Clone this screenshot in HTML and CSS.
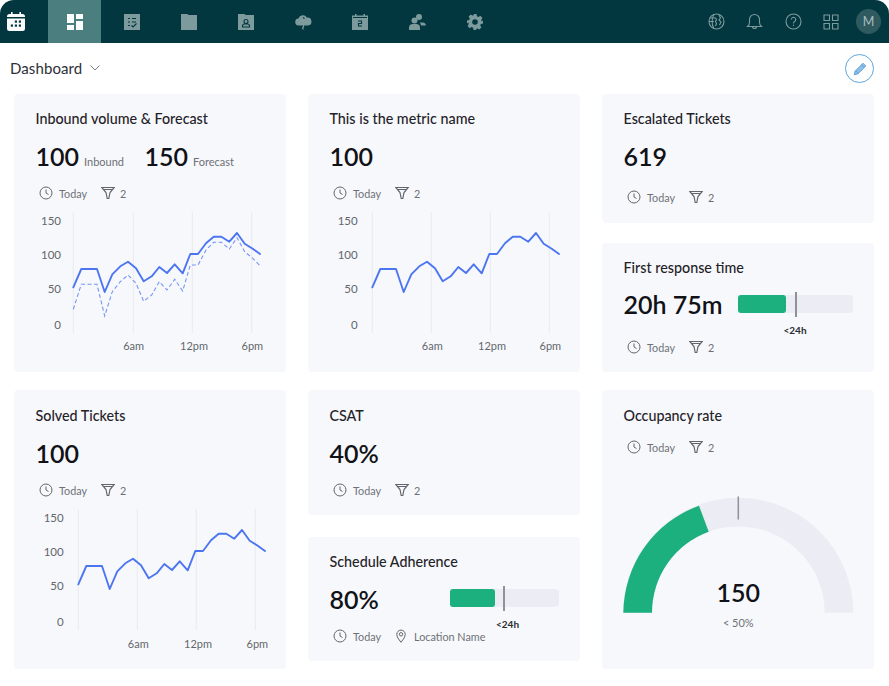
FILE: index.html
```html
<!DOCTYPE html>
<html lang="en">
<head>
<meta charset="utf-8">
<title>Dashboard</title>
<link rel="stylesheet" href="styles.css">
</head>
<body>
<header class="topbar">
  <svg class="logo" viewBox="0 0 18 19" width="18" height="19"><path class="white" d="M4 0h1.600v2h6.800V0H14v2h1.500A2.500 2.500 0 0 1 18 4.500V5H0v-.5A2.500 2.500 0 0 1 2.500 2H4zM0 6.500h18v10a2.500 2.500 0 0 1-2.500 2.500h-13A2.500 2.500 0 0 1 0 16.500z"/><g class="dark"><rect x="7.800" y="8.500" width="2.200" height="2.200"/><rect x="11.800" y="8.500" width="2.200" height="2.200"/><rect x="3.800" y="12.500" width="2.200" height="2.200"/><rect x="7.800" y="12.500" width="2.200" height="2.200"/><rect x="11.800" y="12.500" width="2.200" height="2.200"/></g></svg>
  <nav class="tabs">
    <a class="tab active"><svg viewBox="0 0 16 16" width="16" height="16"><path class="white" d="M0 0h7v9H0zM9 0h7v5H9zM0 11h7v5H0zM9 7h7v9H9z"/></svg></a>
    <a class="tab"><svg viewBox="0 0 16 16" width="16" height="16"><rect class="dim" width="16" height="16"/><path class="dark-line" d="M4 4.500h2M8 4.500h4M4 8h2M8 8h4M4 11.500h2M7.500 11.500l1.500 1.500 3.500-3.500"/></svg></a>
    <a class="tab"><svg viewBox="0 0 16 16" width="16" height="16"><path class="dim" d="M0 0h6.500l1 1H16v15H0z"/></svg></a>
    <a class="tab"><svg viewBox="0 0 16 16" width="16" height="16"><path class="dim" d="M0 0h6.500l1 1H16v15H0z"/><circle class="dark-line" cx="8" cy="7.500" r="2"/><path class="dark-line" d="M4.500 13v-1a2 2 0 0 1 2-2h3a2 2 0 0 1 2 2v1z"/></svg></a>
    <a class="tab"><svg viewBox="0 0 17 16" width="17" height="16"><path class="dim" d="M4 11.500a3.500 3.500 0 0 1-.5-7A4.500 4.500 0 0 1 11.800 3.500 4 4 0 0 1 13 11.500z"/><path class="dim-line" d="M8.500 11v2l-1 1 1 1.500"/><path class="dark-line" d="M8 3.500l1.500 1"/></svg></a>
    <a class="tab"><svg viewBox="0 0 16 16" width="16" height="16"><path class="dim" d="M3 0h1.500v1.500h7V0H13v1.500h3V16H0V1.500h3z"/><path class="dark-fill" d="M1 3h14v1H1z"/><path class="dark-line" d="M6 7h3.500v2.500H6.500V12h3.500"/></svg></a>
    <a class="tab"><svg viewBox="0 0 17 16" width="17" height="16"><circle class="dim" cx="10" cy="3" r="3"/><circle class="dim" cx="5.500" cy="6.500" r="3"/><path class="dim" d="M0 16v-2a4 4 0 0 1 4-4h3a4 4 0 0 1 4 4v2z"/><path class="dim" d="M11 8.500h2.500a3.500 3.500 0 0 1 3.500 3H12z"/></svg></a>
    <a class="tab"><svg viewBox="0 0 16 16" width="16" height="16"><path class="dim" d="M6.500 0h3l.4 2.200 1.500.7 2-1.100 2 2.200-1.200 1.900.6 1.500L16 6.500v3l-2.200.4-.6 1.500 1.200 1.900-2 2.200-2-1.100-1.500.7L9.500 16h-3l-.4-2.200-1.500-.7-2 1.100-2-2.200 1.200-1.900-.6-1.500L0 9.500v-3l2.200-.4.600-1.500L1.600 2.700l2-2.200 2 1.100 1.500-.7z"/><circle class="dark-fill" cx="8" cy="8" r="2.800"/></svg></a>
  </nav>
  <div class="tools">
    <svg viewBox="0 0 17 17" width="17" height="17"><circle class="tool-line" cx="8.500" cy="8.500" r="7.500"/><path class="tool-line" d="M6 1.500C3.500 5 3.500 12 6 15.500M1 8.500h5M2 5h5.500l1 1.500-1 2 1 2-1 2.500M11 2l1.500 3-1.500 2 2 2-1.500 3"/></svg>
    <svg viewBox="0 0 17 17" width="17" height="17"><path class="tool-line" d="M1.500 13.500c1.300-1 2-2.200 2-4V6.500a5 5 0 0 1 10 0v3c0 1.800.7 3 2 4zM6.500 13.500a2 2 0 0 0 4 0"/></svg>
    <svg viewBox="0 0 17 17" width="17" height="17"><circle class="tool-line" cx="8.500" cy="8.500" r="7.500"/><path class="tool-line" d="M6.300 6.500a2.200 2.200 0 1 1 3.400 1.900c-.8.500-1.200 1-1.200 2M8.500 11.800v1.200"/></svg>
    <svg class="tool-last" viewBox="0 0 16 16" width="16" height="16"><path class="tool-line" d="M1 1h5.500v5.500H1zM9.500 1H15v5.500H9.500zM1 9.500h5.500V15H1zM9.500 9.500H15V15H9.500z"/></svg>
    <span class="avatar">M</span>
  </div>
</header>

<div class="subbar">
  <div class="crumb">
    <span>Dashboard</span>
    <svg viewBox="0 0 10 6" width="10" height="6"><path class="chev" d="M.5.500L5 5 9.500.500"/></svg>
  </div>
  <button class="edit" aria-label="Edit">
    <svg viewBox="0 0 14 14" width="14" height="14"><path class="pen" d="M10 1.200l2.800 2.800-8 8-3.600.8.800-3.600z"/><path class="pen-cut" d="M8.500 2.700l2.800 2.800M2.700 8.500l2.800 2.800"/></svg>
  </button>
</div>

<main class="board">
  <section class="column">
    <article class="card tall">
      <h2 class="title">Inbound volume &amp; Forecast</h2>
      <div class="values">
        <span class="value">100</span><span class="unit">Inbound</span>
        <span class="value second">150</span><span class="unit">Forecast</span>
      </div>
      <div class="meta meta-chart">
        <svg class="mi" viewBox="0 0 14 14" width="14" height="14"><circle cx="7" cy="7" r="6"/><path d="M7 3.500V7l2.500 1.500"/></svg><span class="mt">Today</span>
        <svg class="mi filter" viewBox="0 0 14 14" width="14" height="14"><path d="M.8 1.500h12.400L9 6.500 7.800 12.500H6.200L5 6.500zM2.800 3.500h8.400"/></svg><span class="mt">2</span>
      </div>
      <svg class="chart" viewBox="0 0 272 152" width="272" height="152">
        <g class="grid"><path d="M59.300 8v121M119.300 8v121M178.300 8v121M237.700 8v121"/></g>
        <g class="ylab"><text x="47" y="21">150</text><text x="47" y="55">100</text><text x="47" y="89">50</text><text x="47" y="125">0</text></g>
        <g class="xlab"><text x="119.700" y="146">6am</text><text x="180" y="146">12pm</text><text x="238.300" y="146">6pm</text></g>
        <g transform="translate(59.300 0)">
          <polyline class="dash" points="0,105.300 8,80.300 16,80.300 23.700,80.300 31.400,112 39,87.700 47,77.700 54.700,71 62.700,79.300 70.400,97.300 78.400,91 86,77.700 93.700,86 101.400,75.300 109.400,87 117,61 124.700,61 132.700,46 140.400,38.300 148,38.300 156,45 163.700,33.700 171.400,47.700 179.400,54.300 186.700,61.700"/>
          <polyline class="line" points="0,83.300 8,65 16,65 23.700,65 31.400,88 39,70.300 47,62.300 54.700,57.700 62.700,64.300 70.400,77.300 78.400,72.300 86,63 93.700,69 101.400,60.300 109.400,69.300 117,50 124.700,50 132.700,39.300 140.400,32.700 148,32.700 156,37.700 163.700,29 171.400,39.700 179.400,44.700 186.700,50"/>
        </g>
      </svg>
    </article>
    <article class="card tall solved">
      <h2 class="title">Solved Tickets</h2>
      <div class="values"><span class="value">100</span></div>
      <div class="meta meta-chart">
        <svg class="mi" viewBox="0 0 14 14" width="14" height="14"><circle cx="7" cy="7" r="6"/><path d="M7 3.500V7l2.500 1.500"/></svg><span class="mt">Today</span>
        <svg class="mi filter" viewBox="0 0 14 14" width="14" height="14"><path d="M.8 1.500h12.400L9 6.500 7.800 12.500H6.200L5 6.500zM2.800 3.500h8.400"/></svg><span class="mt">2</span>
      </div>
      <svg class="chart" viewBox="0 0 272 152" width="272" height="152">
        <g class="grid"><path d="M64.300 8v121M123.300 8v121M182.300 8v121M241.300 8v121"/></g>
        <g class="ylab"><text x="49.700" y="21">150</text><text x="49.700" y="55">100</text><text x="49.700" y="89">50</text><text x="49.700" y="125">0</text></g>
        <g class="xlab"><text x="124.300" y="147">6am</text><text x="184" y="147">12pm</text><text x="243.300" y="147">6pm</text></g>
        <g transform="translate(64.300 0)">
          <polyline class="line" points="0,83.300 8,65 16,65 23.700,65 31.400,88 39,70.300 47,62.300 54.700,57.700 62.700,64.300 70.400,77.300 78.400,72.300 86,63 93.700,69 101.400,60.300 109.400,69.300 117,50 124.700,50 132.700,39.300 140.400,32.700 148,32.700 156,37.700 163.700,29 171.400,39.700 179.400,44.700 186.700,50"/>
        </g>
      </svg>
    </article>
  </section>

  <section class="column">
    <article class="card tall">
      <h2 class="title">This is the metric name</h2>
      <div class="values"><span class="value">100</span></div>
      <div class="meta meta-chart">
        <svg class="mi" viewBox="0 0 14 14" width="14" height="14"><circle cx="7" cy="7" r="6"/><path d="M7 3.500V7l2.500 1.500"/></svg><span class="mt">Today</span>
        <svg class="mi filter" viewBox="0 0 14 14" width="14" height="14"><path d="M.8 1.500h12.400L9 6.500 7.800 12.500H6.200L5 6.500zM2.800 3.500h8.400"/></svg><span class="mt">2</span>
      </div>
      <svg class="chart" viewBox="0 0 272 152" width="272" height="152">
        <g class="grid"><path d="M64.300 8v121M123.300 8v121M182.300 8v121M241.300 8v121"/></g>
        <g class="ylab"><text x="49.700" y="21">150</text><text x="49.700" y="55">100</text><text x="49.700" y="89">50</text><text x="49.700" y="125">0</text></g>
        <g class="xlab"><text x="124.300" y="146">6am</text><text x="184" y="146">12pm</text><text x="242.300" y="146">6pm</text></g>
        <g transform="translate(64.300 0)">
          <polyline class="line" points="0,83.300 8,65 16,65 23.700,65 31.400,88 39,70.300 47,62.300 54.700,57.700 62.700,64.300 70.400,77.300 78.400,72.300 86,63 93.700,69 101.400,60.300 109.400,69.300 117,50 124.700,50 132.700,39.300 140.400,32.700 148,32.700 156,37.700 163.700,29 171.400,39.700 179.400,44.700 186.700,50"/>
        </g>
      </svg>
    </article>
    <article class="card csat">
      <h2 class="title">CSAT</h2>
      <div class="values"><span class="value">40%</span></div>
      <div class="meta meta-chart">
        <svg class="mi" viewBox="0 0 14 14" width="14" height="14"><circle cx="7" cy="7" r="6"/><path d="M7 3.500V7l2.500 1.500"/></svg><span class="mt">Today</span>
        <svg class="mi filter" viewBox="0 0 14 14" width="14" height="14"><path d="M.8 1.500h12.400L9 6.500 7.800 12.500H6.200L5 6.500zM2.800 3.500h8.400"/></svg><span class="mt">2</span>
      </div>
    </article>
    <article class="card adherence">
      <h2 class="title">Schedule Adherence</h2>
      <div class="values with-bar">
        <span class="value">80%</span>
        <div class="bar bar-short">
          <div class="bar-fill fill-short"></div>
          <div class="bar-tick tick-short"></div>
          <div class="bar-label label-short">&lt;24h</div>
        </div>
      </div>
      <div class="meta meta-chart">
        <svg class="mi" viewBox="0 0 14 14" width="14" height="14"><circle cx="7" cy="7" r="6"/><path d="M7 3.500V7l2.500 1.500"/></svg><span class="mt">Today</span>
        <svg class="mi pin" viewBox="0 0 14 14" width="14" height="14"><path d="M7 13.300C4.500 10 2.800 7.800 2.800 5.300a4.200 4.200 0 0 1 8.400 0c0 2.500-1.700 4.700-4.200 8z"/><circle cx="7" cy="5.300" r="1.700"/></svg><span class="mt">Location Name</span>
      </div>
    </article>
  </section>

  <section class="column">
    <article class="card short">
      <h2 class="title">Escalated Tickets</h2>
      <div class="values"><span class="value">619</span></div>
      <div class="meta meta-low">
        <svg class="mi" viewBox="0 0 14 14" width="14" height="14"><circle cx="7" cy="7" r="6"/><path d="M7 3.500V7l2.500 1.500"/></svg><span class="mt">Today</span>
        <svg class="mi filter" viewBox="0 0 14 14" width="14" height="14"><path d="M.8 1.500h12.400L9 6.500 7.800 12.500H6.200L5 6.500zM2.800 3.500h8.400"/></svg><span class="mt">2</span>
      </div>
    </article>
    <article class="card short response">
      <h2 class="title">First response time</h2>
      <div class="values with-bar">
        <span class="value">20h 75m</span>
        <div class="bar bar-long">
          <div class="bar-fill fill-long"></div>
          <div class="bar-tick tick-long"></div>
          <div class="bar-label label-long">&lt;24h</div>
        </div>
      </div>
      <div class="meta meta-low">
        <svg class="mi" viewBox="0 0 14 14" width="14" height="14"><circle cx="7" cy="7" r="6"/><path d="M7 3.500V7l2.500 1.500"/></svg><span class="mt">Today</span>
        <svg class="mi filter" viewBox="0 0 14 14" width="14" height="14"><path d="M.8 1.500h12.400L9 6.500 7.800 12.500H6.200L5 6.500zM2.800 3.500h8.400"/></svg><span class="mt">2</span>
      </div>
    </article>
    <article class="card tall occupancy">
      <h2 class="title">Occupancy rate</h2>
      <div class="meta meta-top">
        <svg class="mi" viewBox="0 0 14 14" width="14" height="14"><circle cx="7" cy="7" r="6"/><path d="M7 3.500V7l2.500 1.500"/></svg><span class="mt">Today</span>
        <svg class="mi filter" viewBox="0 0 14 14" width="14" height="14"><path d="M.8 1.500h12.400L9 6.500 7.800 12.500H6.200L5 6.500zM2.800 3.500h8.400"/></svg><span class="mt">2</span>
      </div>
      <svg class="gauge" viewBox="0 0 272 145" width="272" height="145">
        <path class="gauge-track" d="M21.300 122.700A115 115 0 0 1 251.300 122.700L222.600 122.700A86.300 86.300 0 0 0 50 122.700Z"/>
        <path class="gauge-fill" d="M21.300 122.700A115 115 0 0 1 97 15.700L106.700 41.700A86.300 86.300 0 0 0 50 122.700Z"/>
        <path class="gauge-tick" d="M136.300 6.500V29.500"/>
        <text class="gauge-value" x="136.300" y="112">150</text>
        <text class="gauge-note" x="136.300" y="137">&lt; 50%</text>
      </svg>
    </article>
  </section>
</main>
</body>
</html>
```

FILE: styles.css
```css
* { box-sizing: border-box; }
html, body { margin: 0; padding: 0; background: #fff; }
body { font-family: Lato, "Liberation Sans", sans-serif; color: #16181d; width: 889px; height: 686px; overflow: hidden; }

.topbar { height: 43px; background: #03373f; border-radius: 14px 14px 0 0; display: flex; align-items: center; padding-left: 7px; }
.logo { flex: none; margin-top: -1px; }
.white { fill: #fbfdfd; }
.dark { fill: #03373f; }
.tabs { display: flex; gap: 4.2px; margin-left: 23px; align-self: stretch; }
.tab { width: 53px; display: flex; align-items: center; justify-content: center; }
.tab.active { background: #4b7f7f; }
.dim { fill: #7d9b9d; }
.dim-line { fill: none; stroke: #7d9b9d; stroke-width: 1.2; }
.dark-line { fill: none; stroke: #03373f; stroke-width: 1.1; }
.dark-fill { fill: #03373f; }
.tools { margin-left: auto; display: flex; align-items: center; padding-right: 8px; }
.tools svg { margin-right: 21.5px; flex: none; }
.tools .tool-last { margin-right: 17px; }
.tool-line { fill: none; stroke: #7d9b9d; stroke-width: 1.1; }
.avatar { width: 25px; height: 25px; border-radius: 50%; background: #2e5a60; color: #a9bfc1; font-size: 12.5px; display: flex; align-items: center; justify-content: center; }

.subbar { height: 51px; display: flex; align-items: center; justify-content: space-between; padding: 0 15px 0 10px; }
.crumb { display: flex; align-items: center; gap: 8px; font-size: 15px; color: #2c3036; letter-spacing: .1px; margin-top: -2px; }
.chev { fill: none; stroke: #7c8087; stroke-width: 1; }
.edit { width: 29px; height: 29px; padding: 0; border-radius: 50%; border: 1px solid #5da5dc; background: #fff; display: flex; align-items: center; justify-content: center; }
.pen { fill: #8fbfe6; stroke: #4f97d3; stroke-width: .8; }
.pen-cut { fill: none; stroke: #4f97d3; stroke-width: .7; }

.board { display: grid; grid-template-columns: repeat(3, 272px); gap: 22px; padding-left: 14px; }
.column { display: flex; flex-direction: column; gap: 18px; }
.column:nth-child(2) > .adherence { margin-top: 4px; }
.column:nth-child(3) > .response { margin-top: 2px; }

.card { background: #f7f8fb; border-radius: 4px; width: 272px; }
.tall { height: 278px; }
.solved { height: 279px; padding-top: 1px; }
.occupancy { height: 279px; padding-top: 1px; }
.csat { height: 125px; padding-top: 1px; }
.adherence { height: 124px; }
.short { height: 129px; }

.title { margin: 0; padding: 16px 21.5px 0; font-size: 14.3px; line-height: 18px; font-weight: 500; color: #1f2228; }
.values { display: flex; align-items: baseline; padding: 11px 21.5px 0; height: 47px; }
.value { font-size: 25px; line-height: 34px; font-weight: 600; color: #101217; white-space: nowrap; }
.value.second { margin-left: 20.5px; }
.unit { font-size: 11px; color: #6d7177; margin-left: 5px; }

.meta { display: flex; align-items: center; padding-left: 25px; height: 16px; font-size: 10.8px; color: #6d7177; }
.meta-chart { margin-top: 10px; }
.meta-low { margin-top: 14px; }
.response .meta-low { margin-top: 15px; }
.meta-top { margin-top: 14px; }
.mi { flex: none; fill: none; stroke: #62666c; stroke-width: 1; }
.mt { margin-left: 6px; margin-right: 14px; }
.filter { stroke-width: 1.2; }
.filter + .mt { margin-left: 5px; }
.pin { margin-left: -1px; }

.chart { display: block; margin-top: 3px; }
.grid path { stroke: #e9eaf0; stroke-width: 1; fill: none; }
.ylab text { font-size: 11.5px; fill: #63676d; text-anchor: end; }
.xlab text { font-size: 11px; fill: #63676d; text-anchor: middle; }
.line { fill: none; stroke: #4c75f2; stroke-width: 1.9; stroke-linejoin: round; stroke-linecap: round; }
.dash { fill: none; stroke: #7594f5; stroke-width: 1.1; stroke-dasharray: 4 2.5; }

.with-bar { justify-content: space-between; align-items: center; padding-top: 9px; }
.response .with-bar { padding-top: 7px; }
.bar { position: relative; height: 18px; background: #ecedf4; border-radius: 4px; flex: none; margin-bottom: 2px; }
.response .bar { margin-bottom: 0; }
.bar-long { width: 115px; margin-right: -.5px; }
.bar-short { width: 109px; }
.bar-fill { height: 18px; background: #1bb07d; border-radius: 3px; }
.fill-long { width: 48px; }
.fill-short { width: 45px; }
.bar-tick { position: absolute; top: -3px; width: 2px; height: 25px; background: #8f9196; }
.tick-long { left: 57px; }
.tick-short { left: 53px; }
.bar-label { position: absolute; top: 29px; font-size: 10px; line-height: 12px; font-weight: 700; color: #2a2d33; white-space: nowrap; transform: translateX(-50%); }
.label-long { left: 57px; }
.label-short { left: 58px; }

.gauge { display: block; margin-top: 35px; }
.gauge-track { fill: #ecedf4; }
.gauge-fill { fill: #1bb07d; }
.gauge-tick { stroke: #8f9196; stroke-width: 1.5; fill: none; }
.gauge-value { font-size: 25px; font-weight: 600; fill: #101217; text-anchor: middle; }
.gauge-note { font-size: 11px; fill: #6d7177; text-anchor: middle; }
```
